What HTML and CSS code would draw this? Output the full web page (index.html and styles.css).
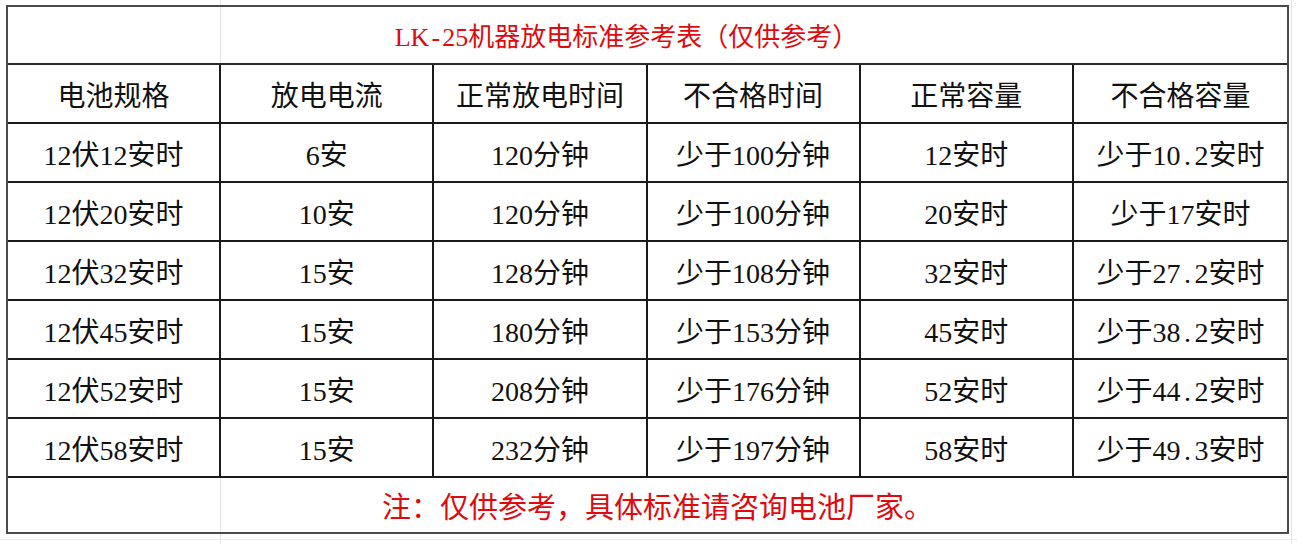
FILE: index.html
```html
<!DOCTYPE html>
<html lang="zh-CN">
<head>
<meta charset="utf-8">
<title>LK-25机器放电标准参考表</title>
<link rel="stylesheet" href="styles.css">
</head>
<body>
<div class="sheet">
  <div class="tbl">
    <div class="title">LK<span class="half">-</span>25机器放电标准参考表（仅供参考）</div>
    <div class="grid">
      <div class="cell">电池规格</div><div class="cell">放电电流</div><div class="cell">正常放电时间</div><div class="cell">不合格时间</div><div class="cell">正常容量</div><div class="cell last">不合格容量</div>
      <div class="cell">12伏12安时</div><div class="cell">6安</div><div class="cell">120分钟</div><div class="cell">少于100分钟</div><div class="cell">12安时</div><div class="cell last">少于10<span class="half">.</span>2安时</div>
      <div class="cell">12伏20安时</div><div class="cell">10安</div><div class="cell">120分钟</div><div class="cell">少于100分钟</div><div class="cell">20安时</div><div class="cell last">少于17安时</div>
      <div class="cell">12伏32安时</div><div class="cell">15安</div><div class="cell">128分钟</div><div class="cell">少于108分钟</div><div class="cell">32安时</div><div class="cell last">少于27<span class="half">.</span>2安时</div>
      <div class="cell">12伏45安时</div><div class="cell">15安</div><div class="cell">180分钟</div><div class="cell">少于153分钟</div><div class="cell">45安时</div><div class="cell last">少于38<span class="half">.</span>2安时</div>
      <div class="cell">12伏52安时</div><div class="cell">15安</div><div class="cell">208分钟</div><div class="cell">少于176分钟</div><div class="cell">52安时</div><div class="cell last">少于44<span class="half">.</span>2安时</div>
      <div class="cell">12伏58安时</div><div class="cell">15安</div><div class="cell">232分钟</div><div class="cell">少于197分钟</div><div class="cell">58安时</div><div class="cell last">少于49<span class="half">.</span>3安时</div>
    </div>
    <div class="note">注：仅供参考，具体标准请咨询电池厂家。</div>
  </div>
</div>
</body>
</html>
```

FILE: styles.css
```css
html, body {
  margin: 0;
  padding: 0;
  background: #fff;
}

body {
  width: 1297px;
  height: 544px;
  overflow: hidden;
  background-image:
    linear-gradient(to right, transparent 220px, #e4e4e4 220px, #e4e4e4 221px, transparent 221px),
    linear-gradient(to right, transparent 1291px, #e4e4e4 1291px, #e4e4e4 1292px, transparent 1292px),
    linear-gradient(to bottom, transparent 539px, #ececec 539px, #ececec 540px, transparent 540px);
  font-family: "Liberation Serif", "Noto Sans CJK SC", serif;
  color: #111;
}

.sheet {
  padding: 5px 0 0 6px;
}

.tbl {
  box-sizing: border-box;
  width: 1283px;
  border: 2px solid #4a4a4a;
}

.title {
  box-sizing: border-box;
  height: 58px;
  padding-top: 4px;
  line-height: 54px;
  border-bottom: 2px solid #2a2a2a;
  text-align: center;
  white-space: nowrap;
  color: #e00a0e;
  font-size: 26px;
  padding-right: 42px;
}

.half {
  display: inline-block;
  width: 0.5em;
  text-align: center;
}

.grid {
  display: grid;
  grid-template-columns: repeat(6, 1fr);
  grid-auto-rows: 59px;
}

.cell {
  box-sizing: border-box;
  border-right: 2px solid #1a1a1a;
  border-bottom: 2px solid #1a1a1a;
  padding-top: 6px;
  text-align: center;
  white-space: nowrap;
  font-size: 28px;
  line-height: 51px;
  overflow: hidden;
}

.cell.last {
  border-right: none;
}

.note {
  box-sizing: border-box;
  height: 54px;
  padding-top: 7px;
  line-height: 47px;
  text-align: center;
  white-space: nowrap;
  color: #e00a0e;
  font-size: 29px;
  padding-left: 20px;
}
```
